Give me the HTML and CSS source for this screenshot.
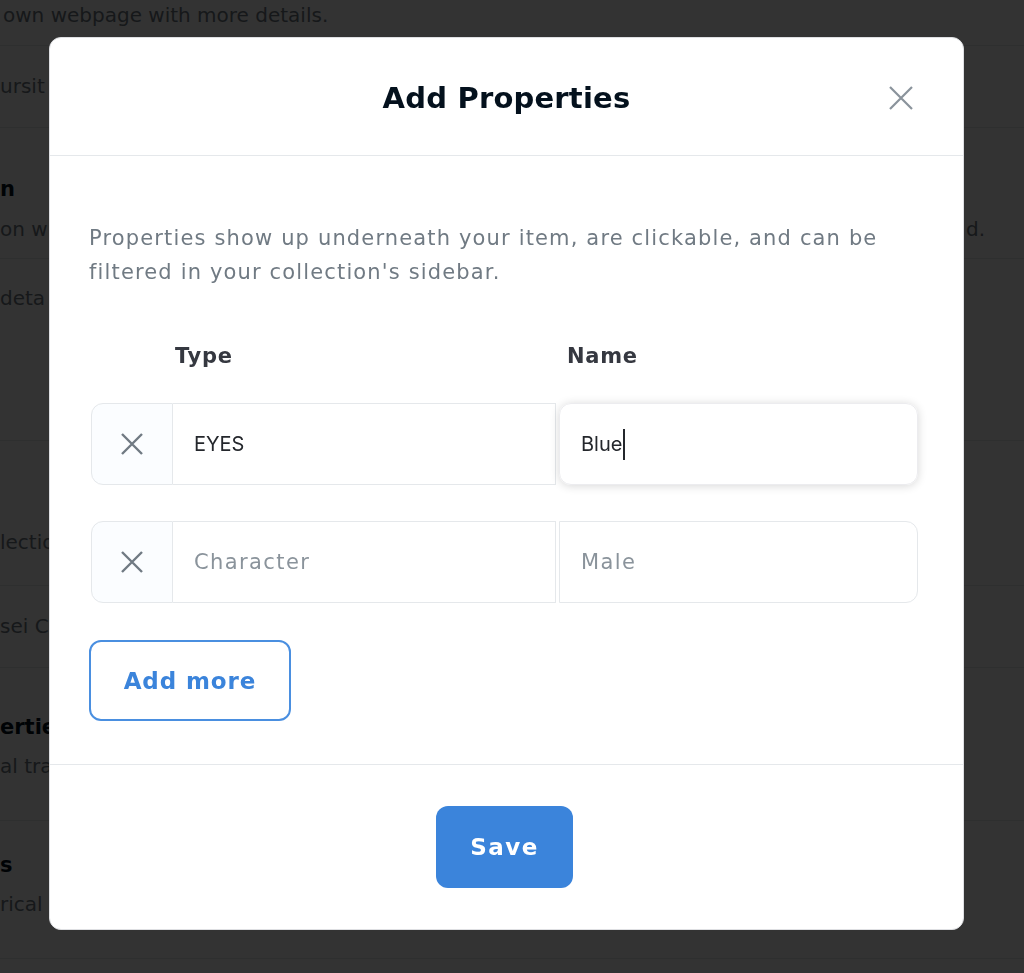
FILE: index.html
```html
<!DOCTYPE html>
<html lang="en">
<head>
<meta charset="utf-8">
<title>Add Properties</title>
<link rel="stylesheet" href="styles.css">
</head>
<body>
<div class="page">
  <div class="pg-row r1"><p class="pg-muted">own webpage with more details.</p></div>
  <div class="pg-row r2"><p class="pg-muted">ursit</p></div>
  <div class="pg-row r3">
    <p class="pg-label">n</p>
    <div class="pg-split"><p class="pg-muted">on wi</p><p class="pg-muted">d.</p></div>
  </div>
  <div class="pg-row r4"><p class="pg-muted">deta</p></div>
  <div class="pg-row r5"><p class="pg-muted">lectio</p></div>
  <div class="pg-row r6"><p class="pg-muted">sei C</p></div>
  <div class="pg-row r7"><p class="pg-label">ertie</p><p class="pg-muted pg-sub">al tra</p></div>
  <div class="pg-row r8"><p class="pg-label">s</p><p class="pg-muted pg-sub">rical</p></div>
</div>
<div class="overlay"></div>
<div class="modal" role="dialog" aria-labelledby="modal-title">
  <header class="modal-head">
    <h2 id="modal-title" class="modal-title">Add Properties</h2>
    <button class="close-btn" aria-label="Close">
      <svg width="24" height="24" viewBox="0 0 24 24"><path d="M1 1 L23 23 M23 1 L1 23" stroke="#8a939b" stroke-width="2.2" fill="none" stroke-linecap="butt"/></svg>
    </button>
  </header>
  <div class="modal-body">
    <p class="desc">Properties show up underneath your item, are clickable, and can be<br>filtered in your collection's sidebar.</p>
    <div class="prop-grid prop-labels">
      <span></span>
      <span class="lab lab-type">Type</span>
      <span class="lab lab-name">Name</span>
    </div>
    <div class="prop-grid prop-row">
      <button class="del-btn" aria-label="Remove">
        <svg width="22" height="22" viewBox="0 0 22 22"><path d="M1 1 L21 21 M21 1 L1 21" stroke="#707a83" stroke-width="2.4" fill="none"/></svg>
      </button>
      <div class="field field-type"><span class="val">EYES</span></div>
      <div class="field field-name is-focused"><span class="val">Blue</span><span class="caret"></span></div>
    </div>
    <div class="prop-grid prop-row">
      <button class="del-btn" aria-label="Remove">
        <svg width="22" height="22" viewBox="0 0 22 22"><path d="M1 1 L21 21 M21 1 L1 21" stroke="#707a83" stroke-width="2.4" fill="none"/></svg>
      </button>
      <div class="field field-type"><span class="ph">Character</span></div>
      <div class="field field-name"><span class="ph">Male</span></div>
    </div>
    <button class="add-more">Add more</button>
  </div>
  <footer class="modal-foot">
    <button class="save-btn">Save</button>
  </footer>
</div>
</body>
</html>
```
FILE: styles.css
```css
* { box-sizing: border-box; }
html, body { margin: 0; padding: 0; }
body {
  width: 1024px;
  height: 973px;
  overflow: hidden;
  background: #ffffff;
  font-family: "DejaVu Sans", Inter, sans-serif;
  color: #353840;
}
p { margin: 0; }

/* background page */
.page { display: flex; flex-direction: column; }
.pg-row { border-bottom: 1px solid #e5e8eb; display: flex; flex-direction: column; }
.pg-muted { font-size: 20px; line-height: 30px; color: #707a83; white-space: nowrap; }
.pg-label { font-size: 21px; line-height: 30px; font-weight: 700; color: #04111d; white-space: nowrap; }
.pg-sub { margin-top: 9px; }
.pg-split { display: flex; justify-content: space-between; padding-right: 39px; margin-top: 10px; }
.r1 { height: 46px; padding-left: 3px; }
.r2 { height: 82px; padding-top: 25px; }
.r3 { height: 131px; padding-top: 46px; }
.r4 { height: 182px; padding-top: 24px; }
.r5 { height: 145px; padding-top: 86px; }
.r6 { height: 82px; padding-top: 25px; }
.r7 { height: 153px; padding-top: 44px; }
.r8 { height: 138px; padding-top: 29px; }

.overlay { position: fixed; inset: 0; background: rgba(0, 0, 0, 0.8); }

/* modal */
.modal {
  position: fixed;
  left: 49px;
  top: 37px;
  width: 915px;
  height: 893px;
  background: #ffffff;
  border: 1px solid #dedfe2;
  border-radius: 12px;
  display: flex;
  flex-direction: column;
  overflow: hidden;
}
.modal-head {
  height: 118px;
  border-bottom: 1px solid #e5e8eb;
  display: flex;
  align-items: center;
  justify-content: center;
  position: relative;
}
.modal-title {
  margin: 0;
  font-size: 29px;
  font-weight: 700;
  color: #04111d;
  letter-spacing: 0.2px;
  padding-top: 2px;
}
.close-btn {
  position: absolute;
  right: 50px;
  top: 48px;
  width: 24px;
  height: 24px;
  padding: 0;
  border: 0;
  background: none;
  display: flex;
}

.modal-body {
  padding: 65px 45px 43px 39px;
  display: flex;
  flex-direction: column;
  align-items: flex-start;
  border-bottom: 1px solid #e5e8eb;
}
.desc {
  font-size: 21px;
  line-height: 34px;
  letter-spacing: 1.15px;
  color: #707a83;
  white-space: nowrap;
}
.prop-grid {
  display: grid;
  margin-left: 2px;
  width: 830px;
}
.prop-labels {
  margin-top: 52px;
  height: 30px;
  align-items: center;
  grid-template-columns: 82px 386px 359px;
}
.lab { font-size: 21px; line-height: 30px; font-weight: 700; color: #353840; letter-spacing: 0.7px; }
.lab-type { padding-left: 2px; }
.lab-name { padding-left: 8px; }

.prop-row { height: 82px; margin-top: 32px; grid-template-columns: 82px 383px 3px 359px; }
.prop-row + .prop-row { margin-top: 36px; }
.del-btn {
  border: 1px solid #e5e8eb;
  border-radius: 12px 0 0 12px;
  background: #fbfdff;
  display: flex;
  align-items: center;
  justify-content: center;
  padding: 0;
}
.field {
  border: 1px solid #e5e8eb;
  display: flex;
  align-items: center;
  padding-left: 21px;
}
.field-type { border-left: 0; grid-column: 2; }
.field-name { grid-column: 4; border-radius: 0 12px 12px 0; }
.field-name.is-focused { border-radius: 12px; box-shadow: 0 1px 10px rgba(0, 0, 0, 0.16); border-color: #ececef; }
.val { font-family: Inter, "Liberation Sans", sans-serif; color: #24272c; font-size: 20px; }
.ph { color: #8a939b; font-size: 21px; letter-spacing: 1.4px; }
.caret { width: 2px; height: 31px; background: #24272c; margin-left: 1px; }

.add-more {
  margin-top: 37px;
  width: 202px;
  height: 81px;
  border: 2px solid #4a8fe0;
  border-radius: 12px;
  background: #ffffff;
  color: #3b84db;
  font-family: "DejaVu Sans", Inter, sans-serif;
  font-size: 23px;
  font-weight: 700;
  letter-spacing: 0.9px;
  padding: 0;
}

.modal-foot {
  flex: 1;
  display: flex;
  justify-content: center;
  padding-top: 41px;
}
.save-btn {
  width: 137px;
  height: 82px;
  border: 0;
  border-radius: 12px;
  background: #3b84db;
  color: #ffffff;
  font-family: "DejaVu Sans", Inter, sans-serif;
  font-size: 23px;
  font-weight: 700;
  letter-spacing: 1.5px;
  padding: 0;
  margin-left: -4px;
}
```
